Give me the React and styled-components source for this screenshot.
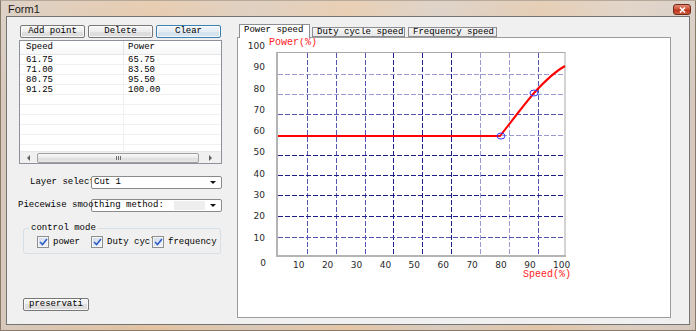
import React from "react";
import styled, { createGlobalStyle } from "styled-components";

const MONO = `"Liberation Mono", "DejaVu Sans Mono", monospace`;

const Global = createGlobalStyle`
  html, body { margin: 0; padding: 0; background: #fff; }
  body { width: 696px; height: 331px; overflow: hidden; font-family: ${MONO}; }
  * { box-sizing: border-box; }
`;

const Window = styled.div`
  width: 696px;
  height: 331px;
  display: flex;
  flex-direction: column;
  padding: 0 5px 5px 5px;
  background:
    linear-gradient(180deg, rgba(255,255,255,0.18), rgba(255,255,255,0) 30%),
    linear-gradient(90deg, #d6c9bd 0%, #dcc5ae 10%, #e3c3a2 22%, #dac8b6 36%, #e5c6a6 50%, #d8cbbf 63%, #e1c5a8 78%, #dccdbf 90%, #d5c9be 100%);
  border: 1px solid #8a7a6a;
  border-top-color: #b7a999;
`;

const TitleBar = styled.div`
  height: 15px;
  display: flex;
  align-items: flex-start;
  justify-content: space-between;
  padding-left: 2px;
`;

const Title = styled.span`
  font: 11px "Liberation Sans", Arial, sans-serif;
  color: #1b1b1b;
  line-height: 16px;
`;

const CloseButton = styled.div`
  width: 18px;
  height: 11px;
  margin-top: 3px;
  margin-right: -1px;
  border: 1px solid #6e2a1c;
  border-radius: 3px;
  background: linear-gradient(#e58a74, #d1553a 45%, #b9341c 55%, #cf5a3c);
  display: flex;
  align-items: center;
  justify-content: center;
`;

const ClientFrame = styled.div`
  flex: 1;
  display: flex;
  border: 1px solid #747474;
  background: #f0f0f0;
`;

const LeftPanel = styled.div`
  width: 224px;
  display: flex;
  flex-direction: column;
  padding-top: 8px;
`;

const ButtonRow = styled.div`
  display: flex;
  gap: 3px;
  margin-left: 13px;
`;

const Button = styled.button`
  width: ${(p) => p.$w || 65}px;
  height: 13px;
  padding: 0 3px;
  margin: 0;
  font: 9px ${MONO};
  line-height: 11px;
  color: #000;
  text-align: center;
  word-break: break-all;
  overflow: hidden;
  border: 1px solid ${(p) => (p.$focused ? "#3c7fb1" : "#777")};
  border-radius: 2px;
  background: ${(p) =>
    p.$focused
      ? "linear-gradient(#f0f6fa, #e4edf4 50%, #d8e5ef 50%, #d2e2ee)"
      : "linear-gradient(#f7f7f7, #ececec 50%, #e0e0e0 50%, #dadada)"};
  box-shadow: inset 0 0 0 1px rgba(255, 255, 255, 0.75);
`;

const ButtonText = styled.span`
  display: block;
  height: 11px;
  overflow: hidden;
`;

const ListView = styled.div`
  margin: 2px 0 0 12px;
  width: 203px;
  height: 124px;
  border: 1px solid #8d929a;
  background: #fff;
  display: flex;
  flex-direction: column;
  font: 9px ${MONO};
  color: #000;
`;

const HeaderRow = styled.div`
  height: 14px;
  display: grid;
  grid-template-columns: 104px 1fr;
  background: linear-gradient(#ffffff, #f7f8f9);
  border-bottom: 1px solid #e6e6e6;
`;

const HeaderCell = styled.div`
  padding-left: ${(p) => p.$pad}px;
  line-height: 13px;
  border-right: ${(p) => (p.$sep ? "1px solid #e3e3e3" : "none")};
`;

const ListBody = styled.div`
  flex: 1;
  overflow: hidden;
`;

const Row = styled.div`
  height: 10px;
  display: grid;
  grid-template-columns: 104px 1fr;
  border-bottom: 1px solid #f1f1f1;
`;

const Cell = styled.div`
  padding-left: ${(p) => p.$pad}px;
  line-height: 10px;
  border-right: ${(p) => (p.$sep ? "1px solid #f0f0f0" : "none")};
`;

const ScrollBar = styled.div`
  height: 12px;
  display: flex;
  align-items: center;
  background: #f0f0f0;
  border-top: 1px solid #e8e8e8;
`;

const ArrowBox = styled.div`
  width: ${(p) => p.$w}px;
  height: 100%;
  display: flex;
  align-items: center;
  justify-content: center;
`;

const Tri = styled.div`
  width: 0;
  height: 0;
  border-top: 3px solid transparent;
  border-bottom: 3px solid transparent;
  ${(p) => (p.$dir === "left" ? "border-right: 3px solid #606060;" : "border-left: 3px solid #606060;")}
`;

const Thumb = styled.div`
  width: 162px;
  height: 10px;
  border: 1px solid #a0a0a0;
  border-radius: 2px;
  background: linear-gradient(#f8f8f8, #ebebeb 50%, #dedede 50%, #e6e6e6);
  display: flex;
  align-items: center;
  justify-content: center;
  gap: 1px;
`;

const Grip = styled.span`
  width: 1px;
  height: 4px;
  background: #707070;
`;

const FieldRow = styled.div`
  display: flex;
  align-items: center;
  margin-top: ${(p) => p.$mt}px;
  height: 13px;
`;

const FieldLabel = styled.span`
  margin-left: ${(p) => p.$ml}px;
  width: ${(p) => p.$w}px;
  flex: none;
  white-space: nowrap;
  overflow: ${(p) => (p.$over ? "visible" : "hidden")};
  position: ${(p) => (p.$over ? "relative" : "static")};
  z-index: ${(p) => (p.$over ? 1 : "auto")};
  font: 9px ${MONO};
  color: #000;
  line-height: 13px;
`;

const Combo = styled.div`
  width: 131px;
  height: 13px;
  border: 1px solid #8a8a8a;
  border-radius: 2px;
  background: #fff;
  display: flex;
  align-items: center;
  font: 9px ${MONO};
  color: #000;
  padding-left: 2px;
  line-height: 11px;
`;

const ComboText = styled.span`
  flex: 1;
`;

const ComboShade = styled.span`
  margin-left: 80px;
  width: 31px;
  height: 9px;
  background: #eeeeee;
`;

const DropArrow = styled.span`
  width: 0;
  height: 0;
  margin: 0 5px 0 auto;
  border-left: 3px solid transparent;
  border-right: 3px solid transparent;
  border-top: 3px solid #111;
`;

const GroupBox = styled.div`
  position: relative;
  margin: 16px 0 0 16px;
  width: 198px;
  height: 26px;
  border: 1px solid #d5dfe5;
  border-radius: 3px;
  display: flex;
  align-items: center;
  padding-left: 13px;
  padding-top: 2px;
`;

const GroupTitle = styled.span`
  position: absolute;
  top: -6px;
  left: 5px;
  padding: 0 2px;
  background: #f0f0f0;
  font: 9px ${MONO};
  line-height: 10px;
  color: #000;
`;

const CheckItem = styled.label`
  width: ${(p) => p.$w}px;
  flex: none;
  overflow: hidden;
  display: flex;
  align-items: center;
  gap: 4px;
  white-space: nowrap;
  font: 9px ${MONO};
  color: #000;
  position: relative;
  background: transparent;
`;

const CheckBox = styled.span`
  width: 12px;
  height: 12px;
  flex: none;
  border: 1px solid #8e8f8f;
  background: linear-gradient(135deg, #cdd9ea, #f2f5f9);
  box-shadow: inset 0 0 0 1px #f4f6f9;
  display: flex;
  align-items: center;
  justify-content: center;
`;

const SaveButton = styled(Button)`
  margin: 44px 0 0 16px;
`;

const TabControl = styled.div`
  margin: 7px 0 0 6px;
  width: 434px;
  display: flex;
  flex-direction: column;
`;

const TabStrip = styled.div`
  height: 13px;
  display: flex;
  align-items: flex-end;
  padding-left: 2px;
  position: relative;
  z-index: 1;
`;

const Tab = styled.div`
  width: ${(p) => p.$w}px;
  margin-left: ${(p) => p.$ml || 0}px;
  height: ${(p) => (p.$active ? 14 : 10)}px;
  margin-bottom: ${(p) => (p.$active ? -1 : 0)}px;
  border: 1px solid #8c8e94;
  border-bottom: ${(p) => (p.$active ? "none" : "1px solid #8c8e94")};
  background: ${(p) => (p.$active ? "#fff" : "linear-gradient(#f6f6f6, #e8e8e8)")};
  padding-left: 4px;
  font: 9px ${MONO};
  line-height: ${(p) => (p.$active ? 11 : 9)}px;
  color: #000;
  white-space: nowrap;
  overflow: hidden;
`;

const TabPage = styled.div`
  width: 434px;
  height: 281px;
  border: 1px solid #9c9c9c;
  background: #fff;
`;

const ChartSvg = styled.svg`
  display: block;
`;

const rows = [
  ["61.75", "65.75"],
  ["71.00", "83.50"],
  ["80.75", "95.50"],
  ["91.25", "100.00"],
  ["", ""],
  ["", ""],
  ["", ""],
  ["", ""],
  ["", ""],
  ["", ""],
];

const D = "#1e1e8c";
const M = "#5656b2";
const L = "#9a9ad2";
const vLines = [
  [306, M], [335, M], [364, M], [392, D], [421, D],
  [450, D], [479, L], [508, L], [537, M],
];
const hLines = [
  [74, L], [94, L], [114, M], [135, L], [155, D],
  [175, D], [195, D], [216, D], [237, M],
];
const yLabels = [46, 67, 89, 110, 131, 152, 174, 195, 216, 238];

function Chart() {
  return (
    <ChartSvg width="432" height="279" viewBox="237 38 432 279">
      {vLines.map(([x, c]) => (
        <line key={"v" + x} x1={x + 0.5} y1="53" x2={x + 0.5} y2="256" stroke={c} strokeWidth="1" strokeDasharray="5 2" />
      ))}
      {hLines.map(([y, c]) => (
        <line key={"h" + y} x1="277" y1={y + 0.5} x2="564" y2={y + 0.5} stroke={c} strokeWidth="1" strokeDasharray="5 2" />
      ))}
      <rect x="276.5" y="52.5" width="287.5" height="203.5" fill="none" stroke="#a8a8a8" strokeWidth="1" />
      <line x1="276" y1="52" x2="276" y2="257" stroke="#b4b4b4" strokeWidth="2" />
      <line x1="275" y1="256" x2="565" y2="256" stroke="#b4b4b4" strokeWidth="2" />
      <path
        d="M277 136 L499 136 C 510 122, 522 106, 533 93 C 543 82, 553 72, 564 66"
        fill="none"
        stroke="#ff0000"
        strokeWidth="2"
      />
      <ellipse cx="500" cy="136" rx="4" ry="3" fill="none" stroke="#3a3aff" strokeWidth="1" />
      <ellipse cx="533" cy="93" rx="4" ry="3" fill="none" stroke="#3a3aff" strokeWidth="1" />
      <g fontFamily='"DejaVu Sans", Verdana, sans-serif' fontSize="9" fill="#2a2a2a">
        {yLabels.map((y, i) => (
          <text key={"yl" + i} x="264" y={y + 3.3} textAnchor="end">
            {100 - i * 10}
          </text>
        ))}
        <text x="262" y="266.3" textAnchor="middle">0</text>
        {Array.from({ length: 10 }, (_, i) => (
          <text key={"xl" + i} x={292 + 28.9 * i} y="268.3">
            {(i + 1) * 10}
          </text>
        ))}
      </g>
      <g fontFamily={MONO} fontSize="10" fill="#ff1a1a">
        <text x="268" y="44.5">Power(%)</text>
        <text x="522" y="277">Speed(%)</text>
      </g>
    </ChartSvg>
  );
}

function Check({ w, label }) {
  return (
    <CheckItem $w={w}>
      <CheckBox>
        <svg width="9" height="8" viewBox="0 0 9 8">
          <polyline points="1,4 3.5,6.5 8,1" fill="none" stroke="#2f5fc4" strokeWidth="1.6" />
        </svg>
      </CheckBox>
      {label}
    </CheckItem>
  );
}

export default function App() {
  return (
    <>
      <Global />
      <Window>
        <TitleBar>
          <Title>Form1</Title>
          <CloseButton>
            <svg width="7" height="6" viewBox="0 0 7 6">
              <path d="M1 0.5 L6 5.5 M6 0.5 L1 5.5" stroke="#fff" strokeWidth="1.6" />
            </svg>
          </CloseButton>
        </TitleBar>
        <ClientFrame>
          <LeftPanel>
            <ButtonRow>
              <Button>Add point</Button>
              <Button>Delete</Button>
              <Button $focused>Clear</Button>
            </ButtonRow>
            <ListView>
              <HeaderRow>
                <HeaderCell $pad={6} $sep>Speed</HeaderCell>
                <HeaderCell $pad={4}>Power</HeaderCell>
              </HeaderRow>
              <ListBody>
                {rows.map(([s, p], i) => (
                  <Row key={i}>
                    <Cell $pad={6} $sep>{s}</Cell>
                    <Cell $pad={4}>{p}</Cell>
                  </Row>
                ))}
              </ListBody>
              <ScrollBar>
                <ArrowBox $w={17}><Tri $dir="left" /></ArrowBox>
                <Thumb>
                  <Grip />
                  <Grip />
                  <Grip />
                </Thumb>
                <ArrowBox $w={22}><Tri $dir="right" /></ArrowBox>
              </ScrollBar>
            </ListView>
            <FieldRow $mt={12}>
              <FieldLabel $ml={23} $w={61}>Layer select</FieldLabel>
              <Combo>
                <ComboText>Cut 1</ComboText>
                <DropArrow />
              </Combo>
            </FieldRow>
            <FieldRow $mt={10}>
              <FieldLabel $ml={11} $w={73} $over>Piecewise smoothing method:</FieldLabel>
              <Combo>
                <ComboShade />
                <DropArrow />
              </Combo>
            </FieldRow>
            <GroupBox>
              <GroupTitle>control mode</GroupTitle>
              <Check w={54} label="power" />
              <Check w={61} label="Duty cycle" />
              <Check w={66} label="frequency" />
            </GroupBox>
            <SaveButton $w={66}>
              <ButtonText>preservation</ButtonText>
            </SaveButton>
          </LeftPanel>
          <TabControl>
            <TabStrip>
              <Tab $active $w={71}>Power speed</Tab>
              <Tab $w={93} $ml={2}>Duty cycle speed</Tab>
              <Tab $w={89} $ml={3}>Frequency speed</Tab>
            </TabStrip>
            <TabPage>
              <Chart />
            </TabPage>
          </TabControl>
        </ClientFrame>
      </Window>
    </>
  );
}
